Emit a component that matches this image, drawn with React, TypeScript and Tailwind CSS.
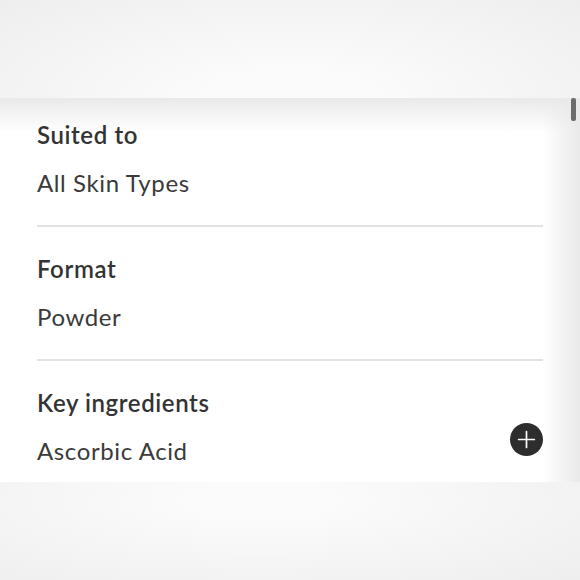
import { Plus } from 'lucide-react';

// ---------------------------------------------------------------------------
// Product detail rows
// ---------------------------------------------------------------------------
const DETAILS = [
  { label: 'Suited to', value: 'All Skin Types', expandable: false },
  { label: 'Format', value: 'Powder', expandable: false },
  { label: 'Key ingredients', value: 'Ascorbic Acid', expandable: true },
];

function DetailRow({
  label,
  value,
  expandable,
}: {
  label: string;
  value: string;
  expandable: boolean;
}) {
  return (
    <div className="flex justify-between border-b-2 border-[#e3e3e3] pt-[26px] pb-[26px] first:pt-[21px]">
      <div className="flex flex-col gap-[16px] tracking-[0.6px]">
        <h3 className="text-[24px] leading-[32px] font-semibold text-[#333333]">{label}</h3>
        <p className="text-[24px] leading-[32px] font-normal text-[#3a3a3a]">{value}</p>
      </div>
      {expandable && (
        <button
          aria-label="Expand"
          className="mt-[36px] flex h-[33px] w-[33px] shrink-0 items-center justify-center rounded-full bg-[#2d2d2d] text-white"
        >
          <Plus className="h-[27px] w-[27px]" strokeWidth={1.5} />
        </button>
      )}
    </div>
  );
}

export default function App() {
  return (
    <div className="flex h-[580px] w-[580px] flex-col bg-[#f2f2f2] font-['Lato','Open_Sans',sans-serif]">
      {/* Backdrop above the sheet */}
      <div className="h-[98px] shrink-0 bg-[radial-gradient(ellipse_at_50%_100%,#fbfbfb_20%,#eeeeee)]" />

      {/* Sheet */}
      <div className="relative h-[384px] shrink-0 overflow-hidden bg-[linear-gradient(to_bottom,#e9e9e9,rgba(255,255,255,0)_34px),linear-gradient(to_right,#ffffff_93.5%,#e9e9e9)] px-[37px]">
        {DETAILS.map((d) => (
          <DetailRow key={d.label} {...d} />
        ))}
        {/* scroll thumb */}
        <div className="absolute top-0 right-[4px] h-[23px] w-[5px] rounded-[2px] bg-[#6c6c6c]" />
      </div>

      {/* Backdrop below the sheet */}
      <div className="flex-1 bg-[radial-gradient(ellipse_at_45%_20%,#fbfbfb_15%,#eeeeee)]" />
    </div>
  );
}
